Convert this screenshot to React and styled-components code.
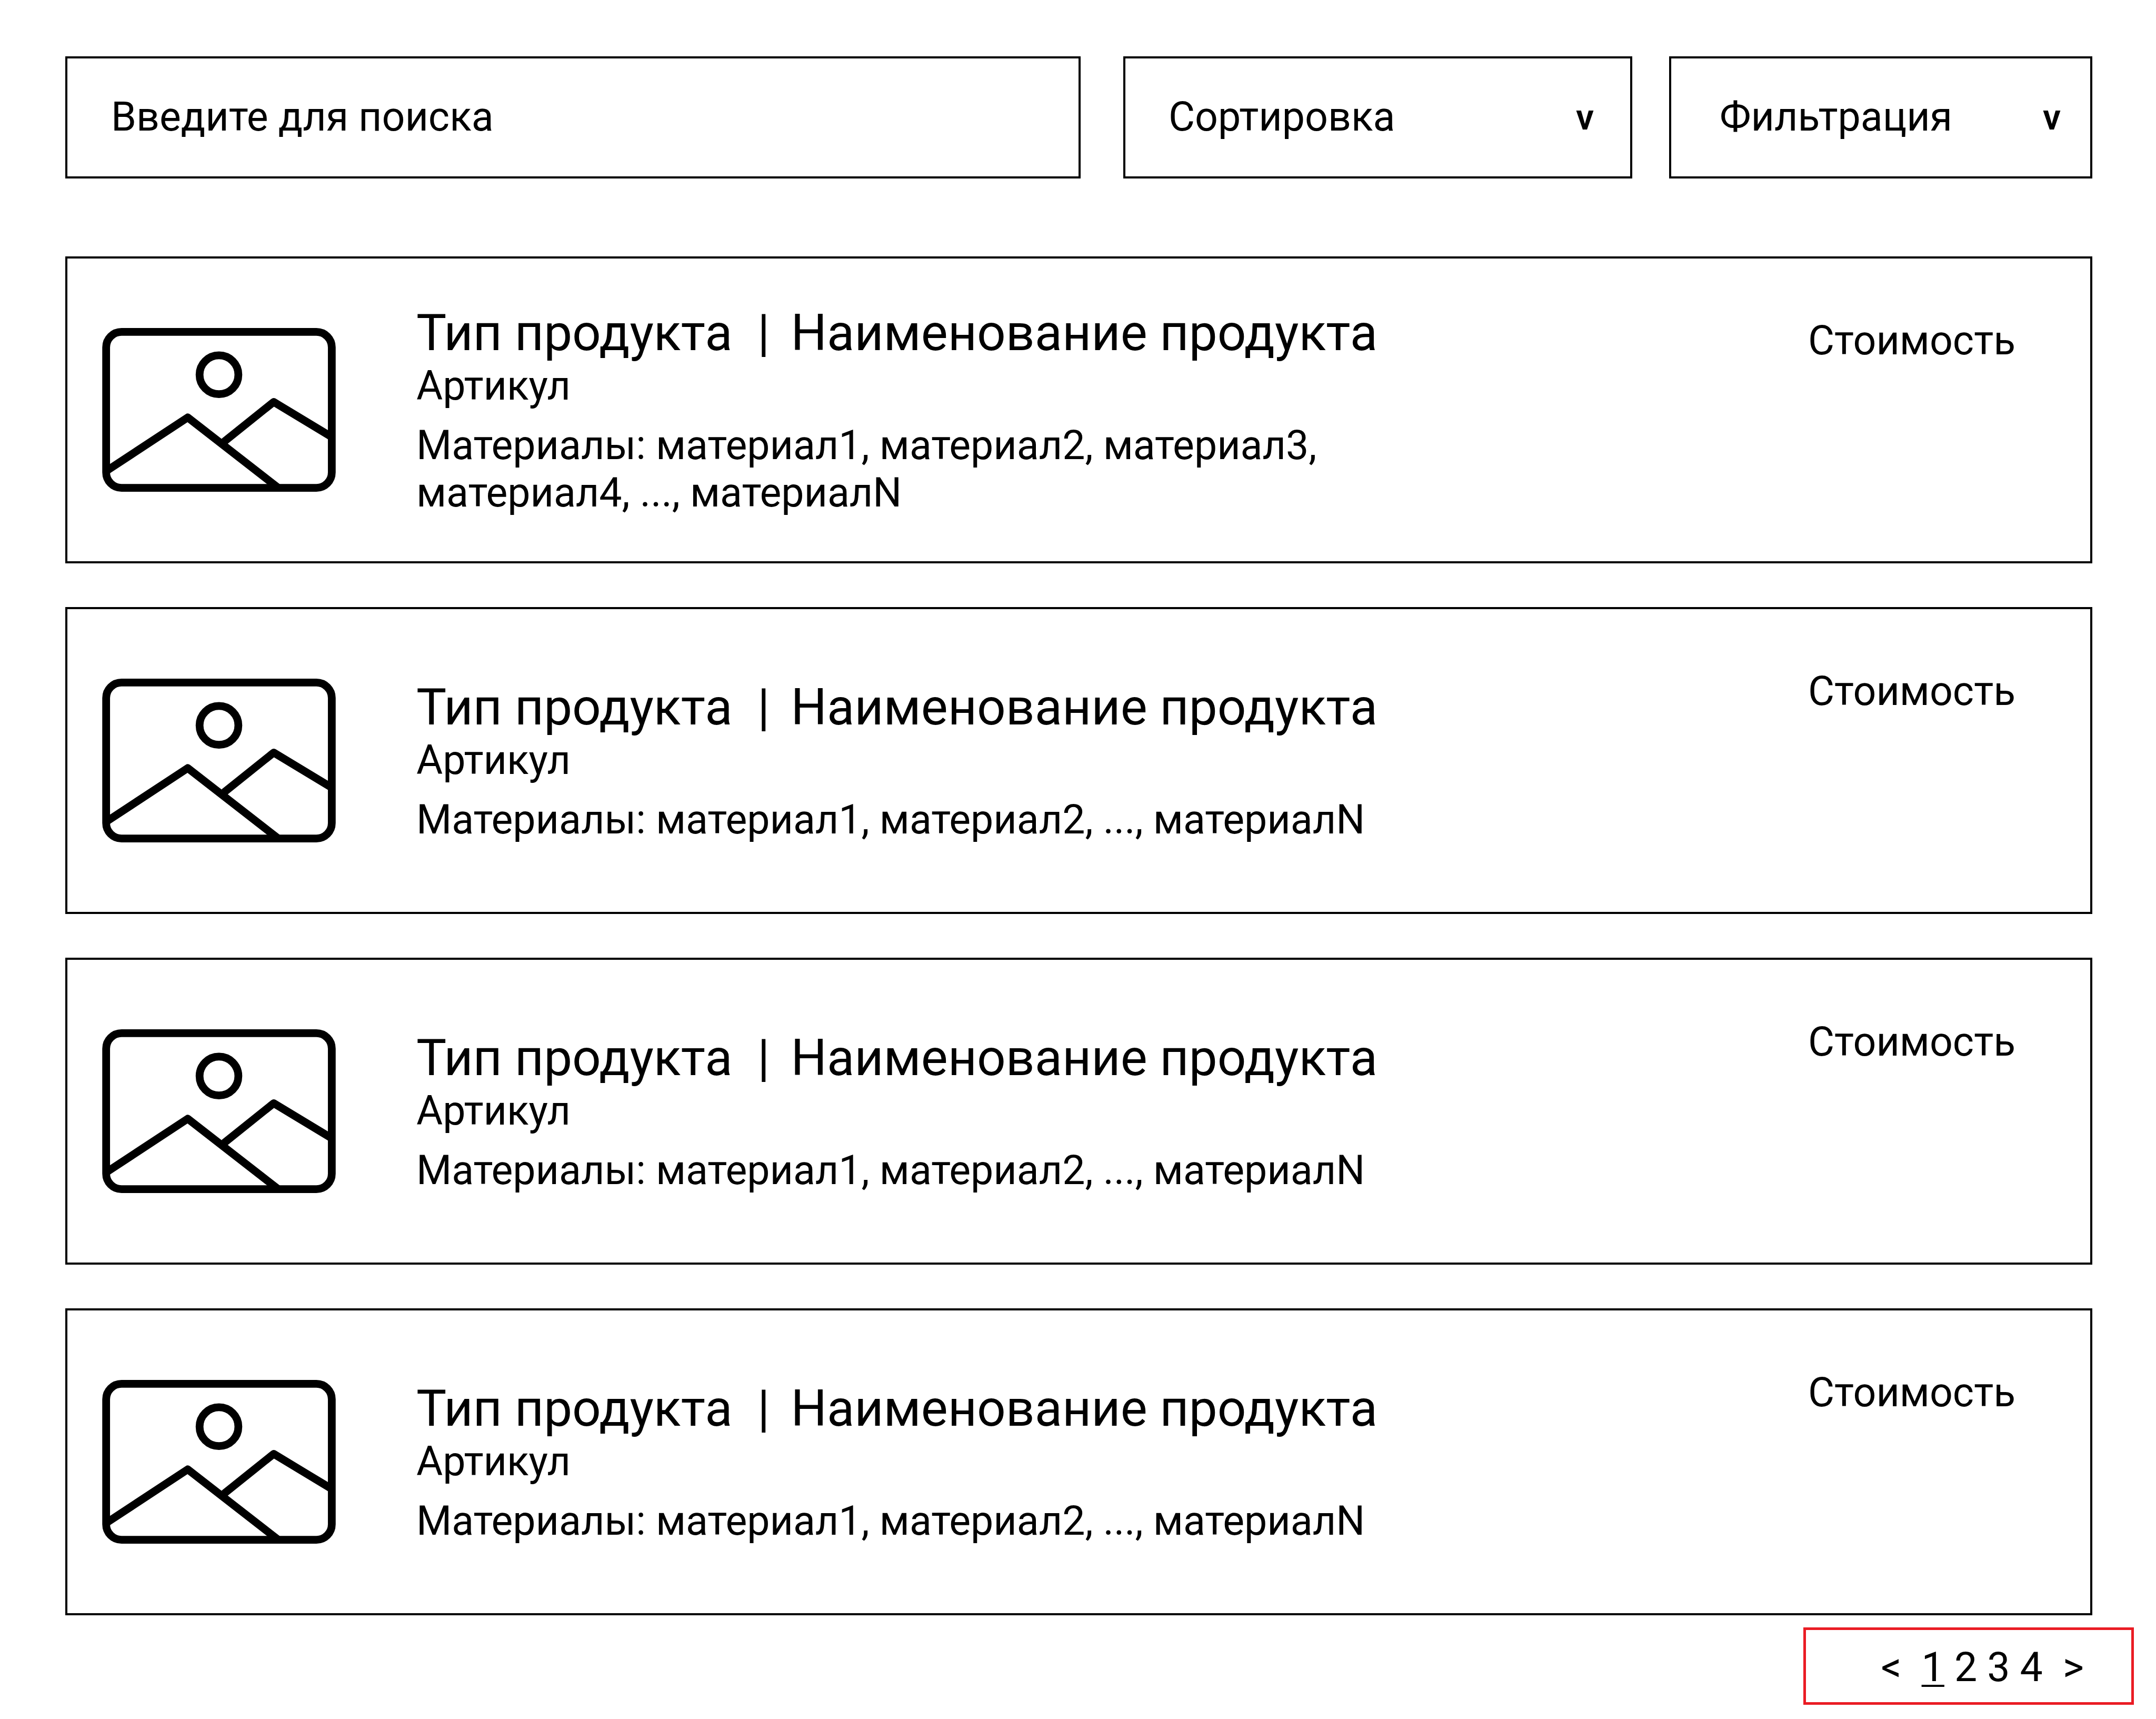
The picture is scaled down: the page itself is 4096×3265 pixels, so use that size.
import React from "react";
import styled, { createGlobalStyle } from "styled-components";

const GlobalStyle = createGlobalStyle`
  *, *::before, *::after { box-sizing: border-box; }
  body {
    margin: 0;
    background: #fff;
    color: #000;
    font-family: Roboto, "Liberation Sans", sans-serif;
    font-size: 77px;
    line-height: 90px;
  }
`;

const Page = styled.div`
  padding-top: 107px;
`;

const Main = styled.main`
  padding: 0 121px 0 124px;
`;

const Toolbar = styled.form`
  display: grid;
  grid-template-columns: minmax(0, 1929fr) minmax(0, 1841fr);
  gap: 81px;
  margin-bottom: 148px;
`;

const SearchInput = styled.input`
  width: 100%;
  height: 232px;
  padding: 0 83px 2px;
  border: 4px solid #000;
  border-radius: 0;
  background: #fff;
  color: #000;
  font: inherit;
  outline: none;
  &::placeholder { color: #000; opacity: 1; }
`;

const Selects = styled.div`
  display: grid;
  grid-template-columns: minmax(0, 967fr) minmax(0, 804fr);
  gap: 70px;
`;

const SelectBox = styled.div`
  display: grid;
  align-items: center;
  & > * { grid-area: 1 / 1; }
`;

const Select = styled.select`
  appearance: none;
  width: 100%;
  height: 232px;
  padding: 0 0 2px ${(p) => p.$inset}px;
  border: 4px solid #000;
  border-radius: 0;
  background: #fff;
  color: #000;
  font: inherit;
  outline: none;
`;

const Chevron = styled.span`
  justify-self: end;
  padding-right: ${(p) => p.$inset}px;
  font-size: 68px;
  font-weight: 600;
  pointer-events: none;
`;

const List = styled.ul`
  display: flex;
  flex-direction: column;
  gap: 83px;
  margin: 0;
  padding: 0;
  list-style: none;
`;

const Card = styled.li`
  display: flex;
  align-items: center;
  min-height: 583px;
  padding: 0 142px 0 66px;
  border: 4px solid #000;
`;

const Picture = styled.svg`
  flex: none;
  width: 444px;
  height: 311px;
  margin-right: 153px;
  fill: none;
  stroke: #000;
  stroke-width: 15.4;
  stroke-linejoin: round;
`;

const Details = styled.div`
  flex: 1;
  min-width: 0;
`;

const Title = styled.h2`
  display: flex;
  gap: 40px;
  margin: 0;
  font-size: 96px;
  font-weight: 400;
  line-height: 112px;
  white-space: pre;
`;

const Line = styled.p`
  margin: 0;
`;

const Materials = styled.p`
  max-width: 1840px;
  margin: 23px 0 0;
`;

const Price = styled.div`
  align-self: flex-start;
  padding-top: 111px;
`;

const Footer = styled.footer`
  display: flex;
  justify-content: flex-end;
  padding: 23px 42px 0;
`;

const Pager = styled.nav`
  display: flex;
  align-items: center;
  gap: 38px;
  height: 147px;
  padding: 4px 90px 0 142px;
  border: 5px solid #ea1c24;
`;

const Pages = styled.div`
  display: flex;
  gap: 19px;
`;

const PageLink = styled.a`
  color: #000;
  text-decoration: ${(p) => (p.$current ? "underline" : "none")};
  text-decoration-thickness: 4px;
  text-underline-offset: 7px;
`;

const Arrow = styled.button`
  padding: 0;
  border: 0;
  background: none;
  color: #000;
  font: inherit;
`;

const short = "материал1, материал2, ..., материалN";
const products = [
  { id: 1, materials: "материал1, материал2, материал3, материал4, ..., материалN" },
  { id: 2, materials: short },
  { id: 3, materials: short },
  { id: 4, materials: short },
];

function Placeholder() {
  return (
    <Picture viewBox="0 0 462 324" role="img" aria-label="Изображение">
      <rect x="7.7" y="7.7" width="446.6" height="308.6" rx="30.5" />
      <circle cx="231" cy="92.5" r="38.4" />
      <path d="M8 283L169.2 177L348 316" />
      <path d="M241 225L339.3 146.3L454 215.6" />
    </Picture>
  );
}

function Dropdown({ label, inset, arrowInset }) {
  return (
    <SelectBox>
      <Select aria-label={label} $inset={inset}>
        <option>{label}</option>
      </Select>
      <Chevron $inset={arrowInset} aria-hidden="true">v</Chevron>
    </SelectBox>
  );
}

export default function App() {
  return (
    <Page>
      <GlobalStyle />
      <Main>
        <Toolbar>
          <SearchInput type="text" aria-label="Поиск" placeholder="Введите для поиска" />
          <Selects>
            <Dropdown label="Сортировка" inset={82} arrowInset={73} />
            <Dropdown label="Фильтрация" inset={92} arrowInset={60} />
          </Selects>
        </Toolbar>
        <List>
          {products.map((p) => (
            <Card key={p.id}>
              <Placeholder />
              <Details>
                <Title>
                  <span>{"Тип продукта  |"}</span>
                  <span>Наименование продукта</span>
                </Title>
                <Line>Артикул</Line>
                <Materials>{`Материалы: ${p.materials}`}</Materials>
              </Details>
              <Price>Стоимость</Price>
            </Card>
          ))}
        </List>
      </Main>
      <Footer>
        <Pager aria-label="Страницы">
          <Arrow type="button">&lt;</Arrow>
          <Pages>
            {[1, 2, 3, 4].map((n) => (
              <PageLink key={n} href={`#${n}`} $current={n === 1}>{n}</PageLink>
            ))}
          </Pages>
          <Arrow type="button">&gt;</Arrow>
        </Pager>
      </Footer>
    </Page>
  );
}
